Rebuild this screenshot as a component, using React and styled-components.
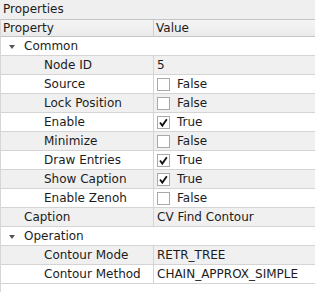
import React from 'react';
import styled, { createGlobalStyle } from 'styled-components';

const GlobalStyle = createGlobalStyle`
  html, body { margin: 0; padding: 0; background: #ffffff; }
  body { font-family: "DejaVu Sans", Verdana, sans-serif; font-size: 12px; color: #1c1c1c; }
`;

const rows = [
  { kind: 'group', label: 'Common' },
  { kind: 'text', label: 'Node ID', value: '5', depth: 1 },
  { kind: 'bool', label: 'Source', value: false, depth: 1 },
  { kind: 'bool', label: 'Lock Position', value: false, depth: 1 },
  { kind: 'bool', label: 'Enable', value: true, depth: 1 },
  { kind: 'bool', label: 'Minimize', value: false, depth: 1 },
  { kind: 'bool', label: 'Draw Entries', value: true, depth: 1 },
  { kind: 'bool', label: 'Show Caption', value: true, depth: 1 },
  { kind: 'bool', label: 'Enable Zenoh', value: false, depth: 1 },
  { kind: 'text', label: 'Caption', value: 'CV Find Contour', depth: 0 },
  { kind: 'group', label: 'Operation' },
  { kind: 'text', label: 'Contour Mode', value: 'RETR_TREE', depth: 1 },
  { kind: 'text', label: 'Contour Method', value: 'CHAIN_APPROX_SIMPLE', depth: 1 },
];

export default function App() {
  return (
    <>
      <GlobalStyle />
      <Panel>
        <Title>Properties</Title>
        <Tree>
          <Header>
            <HeadCell>Property</HeadCell>
            <HeadCell $last>Value</HeadCell>
          </Header>
          {rows.map((r, i) => (
            <Row key={r.label} $alt={i % 2 === 1} $group={r.kind === 'group'}>
              {r.kind === 'group' ? (
                <GroupCell>
                  <Arrow />
                  {r.label}
                </GroupCell>
              ) : (
                <>
                  <NameCell $depth={r.depth}>{r.label}</NameCell>
                  <ValueCell>
                    {r.kind === 'bool' ? (
                      <>
                        <Check>
                          {r.value && (
                            <svg width="11" height="11" viewBox="0 0 11 11">
                              <path d="M2 5.5 L4.3 8.6 L8.8 2.2" fill="none" stroke="#111" strokeWidth="1.8" />
                            </svg>
                          )}
                        </Check>
                        {r.value ? 'True' : 'False'}
                      </>
                    ) : (
                      r.value
                    )}
                  </ValueCell>
                </>
              )}
            </Row>
          ))}
        </Tree>
      </Panel>
    </>
  );
}

const Panel = styled.div`
  width: 315px;
  height: 292px;
  display: flex;
  flex-direction: column;
  background: #ffffff;
  overflow: hidden;
`;

const Title = styled.div`
  height: 19px;
  line-height: 19px;
  padding-left: 3px;
  background: #efefef;
`;

const Tree = styled.div`
  flex: 1;
  border-top: 1px solid #c4c4c4;
  border-left: 1px solid #d6d6d6;
  background: #ffffff;
`;

const Header = styled.div`
  display: grid;
  grid-template-columns: 153px 1fr;
  height: 16px;
  background: linear-gradient(#f4f4f4, #ebebeb);
  border-bottom: 1px solid #c4c4c4;
`;

const HeadCell = styled.div`
  line-height: 16px;
  padding-left: 2px;
  border-right: ${p => (p.$last ? 'none' : '1px solid #cfcfcf')};
`;

const Row = styled.div`
  display: grid;
  grid-template-columns: 153px 1fr;
  height: 18px;
  border-bottom: 1px solid #d4d4d4;
  background: ${p => (p.$alt ? '#f0f0f0' : '#ffffff')};
`;

const GroupCell = styled.div`
  grid-column: 1 / 3;
  display: flex;
  align-items: center;
  line-height: 18px;
`;

const Arrow = styled.span`
  width: 0;
  height: 0;
  margin: 1px 9px 0 8px;
  border-left: 3.5px solid transparent;
  border-right: 3.5px solid transparent;
  border-top: 4px solid #555555;
`;

const NameCell = styled.div`
  line-height: 18px;
  padding-left: ${p => (p.$depth ? 43 : 23)}px;
  border-right: 1px solid #d4d4d4;
  white-space: nowrap;
  overflow: hidden;
`;

const ValueCell = styled.div`
  display: flex;
  align-items: center;
  padding-left: 3px;
  line-height: 18px;
  white-space: nowrap;
`;

const Check = styled.span`
  width: 11px;
  height: 11px;
  margin-right: 7px;
  border: 1px solid #a9a9a9;
  background: #ffffff;
  display: flex;
  align-items: center;
  justify-content: center;
`;
